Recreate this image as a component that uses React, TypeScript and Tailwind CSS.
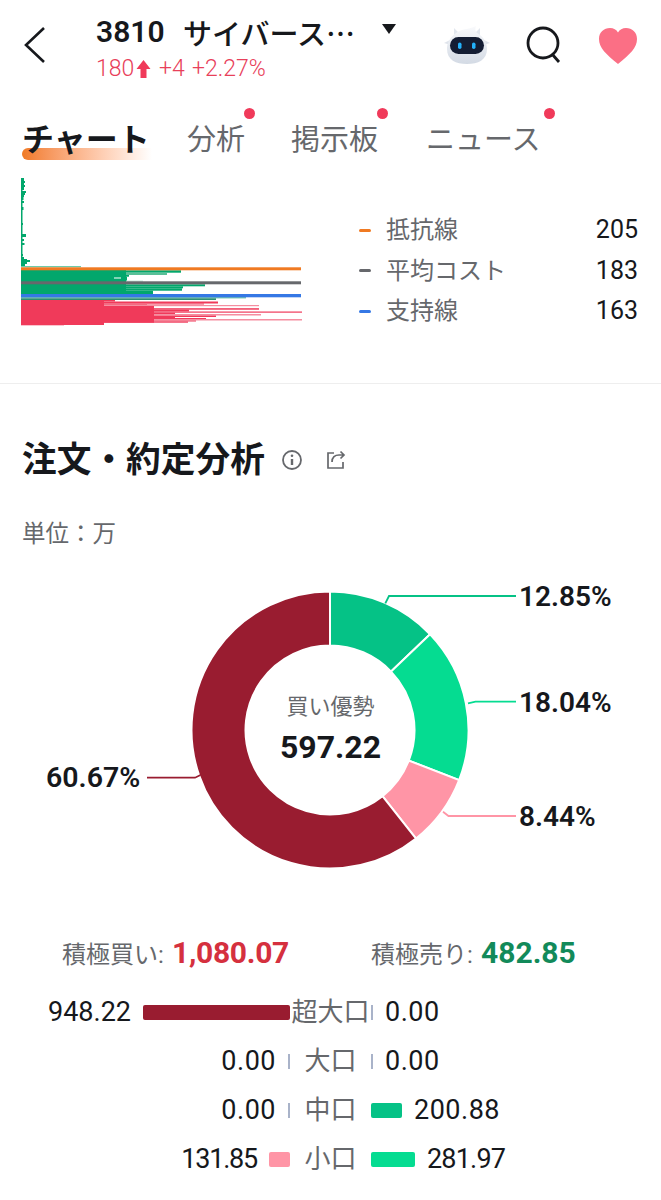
import React from 'react';

const GREEN = '#02a76c';
const RED = '#f03a5a';
const PINK = '#f58ea0';

// [top, height, width] in px within the chart box, whose origin is (21,178)
const upperBars: [number, number, number][] = [
  [0, 3, 3], [3, 2, 4], [5, 2, 3], [7, 2, 4], [9, 3, 3], [13, 2, 5], [15, 2, 4], [17, 2, 3], [19, 3, 2.5],
  [23, 2, 3], [29, 3, 2.5], [45, 2, 2], [56, 3, 5], [61, 2, 3], [65, 2, 3.5], [76, 2, 2], [79, 2, 3],
  [81, 1, 6], [82, 2, 9], [84, 2, 6], [86, 2, 4],
];

const midBars: [number, number, number, string][] = [
  [88, 1.3, 60, '#6fcba9'],
  [92.3, 2.4, 160, GREEN],
  [94.7, 2.3, 146, '#59bf97'],
  [94.7, 2.3, 105, GREEN],
  [97, 1.7, 108, GREEN],
  [98.7, 4, 106, GREEN],
  [102.7, 0.8, 122, '#9fdcc4'],
  [106.3, 2, 184, GREEN],
  [108.3, 2, 162, GREEN],
  [110.3, 2.4, 161, GREEN],
  [112.7, 3.3, 132, GREEN],
  [119.3, 1, 225, '#35a88f'],
  [120.3, 1.7, 195, '#2e8f74'],
];

const redBars: [number, number, number, string][] = [
  [122, 1.5, 94, RED],
  [123.5, 2, 197, RED],
  [125.5, 1, 183, RED],
  [126.5, 1, 126, RED],
  [127, 1.2, 238, PINK],
  [128.2, 2, 133, RED],
  [130.2, 1.5, 238, RED],
  [131.7, 1.8, 168, RED],
  [133.5, 1.2, 293, RED],
  [134.7, 1.3, 154, RED],
  [136, 1.5, 240, PINK],
  [137.5, 1.5, 195, RED],
  [139, 1, 154, RED],
  [140, 1, 185, RED],
  [141, 1.5, 298, PINK],
  [142.5, 1, 175, RED],
  [143.5, 1.2, 167, RED],
  [144.7, 1.3, 65, RED],
  [146, 1.3, 43, RED],
];

function polar(r: number, pct: number) {
  const a = (pct / 100) * 2 * Math.PI;
  return [165 + r * Math.sin(a), 145 - r * Math.cos(a)];
}

function slice(from: number, to: number) {
  const R = 138.5;
  const r = 84.5;
  const [x1, y1] = polar(R, from);
  const [x2, y2] = polar(R, to);
  const [x3, y3] = polar(r, to);
  const [x4, y4] = polar(r, from);
  const big = to - from > 50 ? 1 : 0;
  return `M${x1} ${y1}A${R} ${R} 0 ${big} 1 ${x2} ${y2}L${x3} ${y3}A${r} ${r} 0 ${big} 0 ${x4} ${y4}Z`;
}

const slices = [
  { from: 0, to: 12.85, color: '#05c286' },
  { from: 12.85, to: 30.89, color: '#05dc91' },
  { from: 30.89, to: 39.33, color: '#ff95a6' },
  { from: 39.33, to: 100, color: '#991c30' },
];

const flowRows = [
  { label: '超大口', buy: '948.22', buyT: '', buyW: 147, buyC: '#991c30', sell: '0.00', sellT: 'tracking-[0.5px]', sellW: 0, sellC: '' },
  { label: '大口', buy: '0.00', buyT: 'tracking-[0.5px]', buyW: 0, buyC: '', sell: '0.00', sellT: 'tracking-[0.5px]', sellW: 0, sellC: '' },
  { label: '中口', buy: '0.00', buyT: 'tracking-[0.5px]', buyW: 0, buyC: '', sell: '200.88', sellT: 'tracking-[0.5px]', sellW: 31, sellC: '#05c286' },
  { label: '小口', buy: '131.85', buyT: 'tracking-[-1.2px]', buyW: 21, buyC: '#ff95a6', sell: '281.97', sellT: 'tracking-[-0.8px]', sellW: 44, sellC: '#05dc91' },
];

const legend = [
  { name: '抵抗線', color: 'bg-[#f07a22]', value: '205' },
  { name: '平均コスト', color: 'bg-[#66686c]', value: '183' },
  { name: '支持線', color: 'bg-[#3578e5]', value: '163' },
];

function Robot() {
  return (
    <svg width="48" height="42" viewBox="0 0 48 42">
      <defs>
        <linearGradient id="shell" x1="0" y1="0" x2="0" y2="1">
          <stop offset="0" stopColor="#f9fafc" />
          <stop offset="1" stopColor="#d3dae4" />
        </linearGradient>
      </defs>
      <path d="M0 19l8-4 2 7zM46 19l-8-4-2 7z" fill="#dfe4eb" />
      <path d="M10 11l0-7 6 6zM36 11l0-7-6 6z" fill="#e2e7ee" />
      <path d="M23 5c4-1 7-2 9-3-1 3-1 5 1 7 7 4 10 10 10 16 0 11-9 15-20 15S3 36 3 25C3 15 12 6 23 5z" fill="url(#shell)" />
      <rect x="6" y="13" width="34" height="17" rx="8.500" fill="#141d33" />
      <rect x="14" y="18.500" width="3.500" height="6.500" rx="1.750" fill="#23b2fb" />
      <rect x="28" y="18.500" width="3.500" height="6.500" rx="1.750" fill="#23b2fb" />
    </svg>
  );
}

export default function App() {
  return (
    <div className="w-[661px] h-[1200px] overflow-hidden bg-white text-[#16181c] font-['Roboto','Noto_Sans_CJK_JP',sans-serif]">
      {/* Header */}
      <div className="h-[96px] flex items-start relative">
        <svg className="ml-[22px] mt-[26px] shrink-0" width="26" height="38" viewBox="0 0 26 38" fill="none" stroke="#16181c" strokeWidth="2.6">
          <path d="M22 2L4 19l18 17" />
        </svg>
        <div className="ml-[48px] mt-[13px] w-[348px] shrink-0">
          <div className="flex items-start">
            <span className="w-[87px] text-[30px] leading-[38px] font-semibold whitespace-nowrap">3810</span>
            <span className="w-[199px] text-[29px] leading-[38px] font-medium whitespace-nowrap font-['Noto_Sans_CJK_JP',sans-serif]">サイバース…</span>
            <span className="mt-[11px] w-0 h-0 border-l-[7.500px] border-r-[7.500px] border-t-[10px] border-l-transparent border-r-transparent border-t-[#16181c]" />
          </div>
          <div className="flex items-center text-[23px] leading-[28px] text-[#e8405a] mt-[4px] font-light">
            <span className="w-[40px]">180</span>
            <svg width="15" height="20" viewBox="0 0 15 20" fill="#f03a5a">
              <path d="M7.500 1l7 9h-4v9h-6v-9h-4z" />
            </svg>
            <span className="ml-[8px] w-[33px]">+4</span>
            <span>+2.27%</span>
          </div>
        </div>
        <div className="mt-[24px]">
          <Robot />
        </div>
        <svg className="ml-[33px] mt-[25px] shrink-0" width="38" height="40" viewBox="0 0 38 40" fill="none" stroke="#16181c" strokeWidth="2.8">
          <circle cx="18" cy="18" r="15" />
          <path d="M27 29l7 8" />
        </svg>
        <svg className="ml-[35px] mt-[27px] shrink-0" width="40" height="38" viewBox="0 0 40 38" fill="#fb6f85">
          <path d="M20 37C8 27 1 21 1 12 1 5 6 1 12 1c3.500 0 6.500 1.500 8 4.500C21.500 2.500 24.500 1 28 1c6 0 11 4 11 11 0 9-7 15-19 25z" />
        </svg>
      </div>

      {/* Tabs */}
      <div className="h-[82px] pl-[22px] flex items-start pt-[24px] text-[#66686c] text-[29px] leading-[40px]">
        <div className="relative w-[128px]">
          <span className="relative z-10 text-[32px] font-bold text-[#16181c] whitespace-nowrap">チャート</span>
          <div className="absolute left-0 top-[28px] w-[130px] h-[12px] rounded-tl-[6px] rounded-bl-[6px] bg-gradient-to-r from-[#f07a22] to-white" />
        </div>
        <div className="relative ml-[37px]">
          <span>分析</span>
          <div className="absolute right-[-10px] top-[-12px] w-[11px] h-[11px] rounded-full bg-[#f03a5a]" />
        </div>
        <div className="relative ml-[46px]">
          <span>掲示板</span>
          <div className="absolute right-[-10px] top-[-12px] w-[11px] h-[11px] rounded-full bg-[#f03a5a]" />
        </div>
        <div className="relative ml-[48px]">
          <span className="whitespace-nowrap">ニュース</span>
          <div className="absolute right-[-14px] top-[-12px] w-[11px] h-[11px] rounded-full bg-[#f03a5a]" />
        </div>
      </div>

      {/* Cost distribution */}
      <div className="h-[206px] border-b border-[#eeeeee] flex items-start">
        <svg className="ml-[21px] shrink-0" width="281" height="152" viewBox="0 0 281 152">
          <rect x="0" y="0" width="1.500" height="88" fill={GREEN} />
          {upperBars.map(([y, h, w]) => (
            <rect key={y} x="0" y={y} width={w} height={h} fill={GREEN} />
          ))}
          {midBars.map(([y, h, w, c]) => (
            <rect key={`${y}-${w}`} x="0" y={y} width={w} height={h} fill={c} />
          ))}
          <rect x="0" y="92" width="105" height="24" fill={GREEN} />
          {redBars.map(([y, h, w, c]) => (
            <rect key={y} x="0" y={y} width={w} height={h} fill={c} />
          ))}
          <rect x="0" y="122" width="83" height="25" fill={RED} />
          <rect x="0" y="128" width="133" height="16.700" fill={RED} />
          <rect x="93" y="99.500" width="7" height="1" fill="#ffffff" />
          <rect x="0" y="89.300" width="280" height="3" fill="#f07a22" />
          <rect x="0" y="103.300" width="280" height="3" fill="#66686c" />
          <rect x="0" y="116" width="280" height="3.300" fill="#3578e5" />
        </svg>
        <div className="ml-[57px] w-[279px] mt-[32px]">
          {legend.map(l => (
            <div key={l.name} className="h-[40.500px] flex items-center">
              <div className={`w-[12px] h-[3px] rounded-full ${l.color}`} />
              <span className="ml-[15px] text-[24px] leading-[32px] text-[#66686c] whitespace-nowrap">{l.name}</span>
              <span className="ml-auto text-[25px] leading-[32px]">{l.value}</span>
            </div>
          ))}
        </div>
      </div>

      {/* Order analysis */}
      <div className="pl-[22px] pt-[53px] flex items-center h-[98px]">
        <h2 className="text-[34.700px] leading-[46px] font-bold whitespace-nowrap">注文・約定分析</h2>
        <svg className="ml-[16px]" width="22" height="22" viewBox="0 0 22 22" fill="none" stroke="#66686c" strokeWidth="1.8">
          <circle cx="11" cy="11" r="9" />
          <path d="M11 10v6" strokeWidth="2.400" />
          <circle cx="11" cy="6.800" r="1.300" fill="#66686c" stroke="none" />
        </svg>
        <svg className="ml-[22px]" width="22" height="22" viewBox="0 0 22 22" fill="none" stroke="#66686c" strokeWidth="1.700">
          <path d="M9 4H3v15h15v-6" />
          <path d="M7 13c0-5 3-7 7-7h5M15.500 2.500L19 6l-3.500 3.500" />
        </svg>
      </div>
      <div className="pl-[22px] mt-[36px] text-[23.500px] leading-[32px] text-[#66686c]">単位：万</div>

      {/* Donut */}
      <div className="relative h-[330px] mt-[14.500px]">
        <svg className="absolute left-[165px] top-[20px]" width="330" height="290" viewBox="0 0 330 290" overflow="visible">
          {slices.map(s => (
            <path key={s.color} d={slice(s.from, s.to)} fill={s.color} stroke="#ffffff" strokeWidth="2" />
          ))}
          <path d="M220.300 18.300L224 11H351" fill="none" stroke="#05c286" strokeWidth="1.800" />
          <path d="M303 118.300l7.500-1.600H351" fill="none" stroke="#05dc91" strokeWidth="1.800" />
          <path d="M278 226.700l5.500 4.300H351" fill="none" stroke="#ff95a6" strokeWidth="1.800" />
          <path d="M35.500 190L30 192.700H-18" fill="none" stroke="#991c30" strokeWidth="1.800" />
        </svg>
        <div className="absolute left-[519px] top-[16px] text-[28px] leading-[32px] font-semibold">12.85%</div>
        <div className="absolute left-[519px] top-[122.500px] text-[28px] leading-[32px] font-semibold">18.04%</div>
        <div className="absolute left-[519px] top-[236.500px] text-[28px] leading-[32px] font-semibold">8.44%</div>
        <div className="absolute left-[46px] top-[197.500px] text-[28.500px] leading-[32px] font-semibold">60.67%</div>
        <div className="absolute left-[230.500px] top-[127.500px] w-[200px] text-center">
          <div className="text-[22px] leading-[30px] text-[#66686c]">買い優勢</div>
          <div className="text-[32px] leading-[44px] font-bold mt-[3px]">597.22</div>
        </div>
      </div>

      {/* Active buy/sell totals */}
      <div className="flex items-baseline mt-[38.500px] h-[40px] pl-[62px] text-[#66686c]">
        <span className="w-[110px] text-[24px] leading-[40px] whitespace-nowrap">積極買い:</span>
        <span className="w-[199px] text-[30px] leading-[40px] font-bold text-[#d5303e] tracking-[-0.3px]">1,080.07</span>
        <span className="w-[110px] text-[24px] leading-[40px] whitespace-nowrap">積極売り:</span>
        <span className="text-[30px] leading-[40px] font-bold text-[#128a5a]">482.85</span>
      </div>

      {/* Flow rows */}
      <div className="mt-[14.500px]">
        {flowRows.map(r => (
          <div key={r.label} className="h-[49px] flex items-center text-[27px] leading-[36px]">
            <div className="w-[290px] flex items-center justify-end">
              <span className={r.buyT}>{r.buy}</span>
              {r.buyW > 0 ? (
                <div className="ml-[12px] h-[15px] rounded-[2px]" style={{ width: r.buyW, background: r.buyC }} />
              ) : (
                <div className="ml-[12px] w-[2px] h-[15px] bg-[#a9b3c9]" />
              )}
            </div>
            <div className="w-[81px] text-center text-[26px] text-[#66686c] whitespace-nowrap">{r.label}</div>
            <div className="flex items-center">
              {r.sellW > 0 ? (
                <div className="h-[15px] rounded-[2px]" style={{ width: r.sellW, background: r.sellC }} />
              ) : (
                <div className="w-[2px] h-[15px] bg-[#a9b3c9]" />
              )}
              <span className={`ml-[12px] ${r.sellT}`}>{r.sell}</span>
            </div>
          </div>
        ))}
      </div>
    </div>
  );
}
